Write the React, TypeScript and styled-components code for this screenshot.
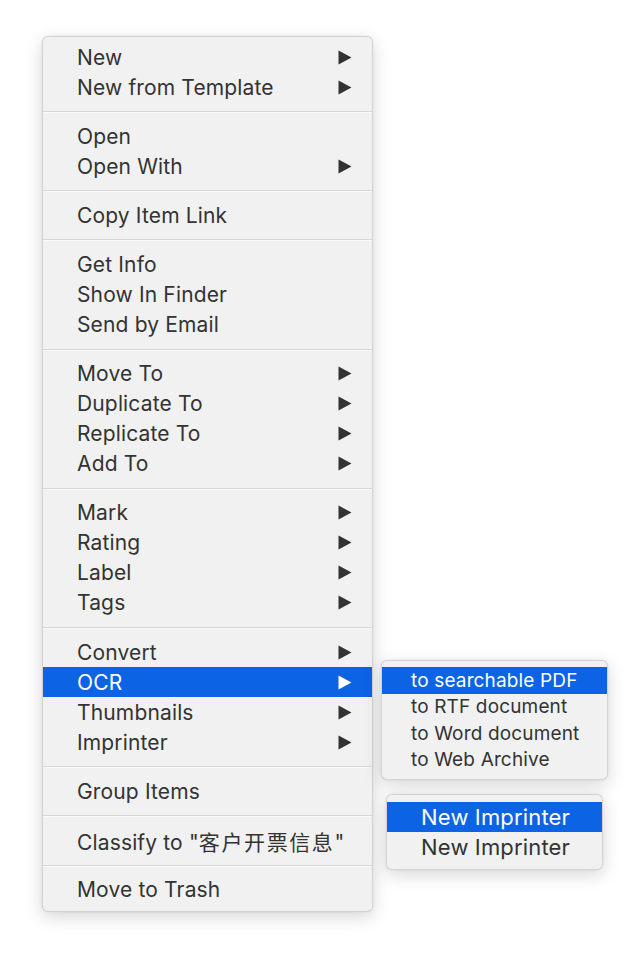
import React from "react";
import styled, { createGlobalStyle } from "styled-components";

const Global = createGlobalStyle`
  html, body { margin: 0; padding: 0; background: #ffffff; }
  body { font-family: Inter, "Noto Sans CJK SC", sans-serif; -webkit-font-smoothing: antialiased; }
`;

const Stage = styled.div`
  display: flex;
  align-items: flex-start;
  padding: 36px 0 0 42px;
  width: 644px;
  height: 960px;
  box-sizing: border-box;
`;

const Menu = styled.div<{ $w: number; $pt: number; $pb: number }>`
  box-sizing: border-box;
  width: ${(p) => p.$w}px;
  background: #f1f1f1;
  border: 1px solid rgba(0, 0, 0, 0.12);
  border-radius: 6px;
  box-shadow: 0 5px 18px rgba(0, 0, 0, 0.16), 0 0 3px rgba(0, 0, 0, 0.06);
  padding: ${(p) => p.$pt}px 0 ${(p) => p.$pb}px;
  display: flex;
  flex-direction: column;
`;

const Row = styled.div<{ $active?: boolean; $h: number; $size: number; $pl: number; $center?: boolean }>`
  height: ${(p) => p.$h}px;
  display: flex;
  align-items: center;
  justify-content: ${(p) => (p.$center ? "center" : "space-between")};
  padding: ${(p) => (p.$center ? "0 0 0 2px" : `0 20px 0 ${p.$pl}px`)};
  font-size: ${(p) => p.$size}px;
  color: ${(p) => (p.$active ? "#ffffff" : "#333333")};
  background: ${(p) => (p.$active ? "#0c63e4" : "transparent")};
  white-space: nowrap;
  letter-spacing: 0.15px;
`;

const Label = styled.span``;

const Cjk = styled.span`
  letter-spacing: 1.6px;
`;

const Separator = styled.div`
  height: 1px;
  margin: 9px 0 9.2px;
  background: #d6d6d6;
  box-shadow: 0 1px 0 #fafafa;
`;

const Side = styled.div`
  display: flex;
  flex-direction: column;
  align-items: flex-start;
  margin-top: 624px;
  margin-left: 8px;
`;

const SecondMenuWrap = styled.div`
  margin: 14px 0 0 5px;
`;

const Arrow = ({ active }: { active?: boolean }) => (
  <svg width="14" height="15" viewBox="0 0 14 15">
    <polygon points="0.5,0.5 13.5,7.5 0.5,14.5" fill={active ? "#ffffff" : "#333333"} />
  </svg>
);

type Item = { label: React.ReactNode; key: string; sub?: boolean; active?: boolean };

const it = (label: string, sub = false, active = false): Item => ({ label, key: label, sub, active });

const sections: Item[][] = [
  [it("New", true), it("New from Template", true)],
  [it("Open"), it("Open With", true)],
  [it("Copy Item Link")],
  [it("Get Info"), it("Show In Finder"), it("Send by Email")],
  [it("Move To", true), it("Duplicate To", true), it("Replicate To", true), it("Add To", true)],
  [it("Mark", true), it("Rating", true), it("Label", true), it("Tags", true)],
  [it("Convert", true), it("OCR", true, true), it("Thumbnails", true), it("Imprinter", true)],
  [it("Group Items")],
  [
    {
      key: "classify",
      label: (
        <>
          Classify to "<Cjk>客户开票信息</Cjk>"
        </>
      ),
    },
  ],
  [it("Move to Trash")],
];

const ocrItems = ["to searchable PDF", "to RTF document", "to Word document", "to Web Archive"];

export default function App() {
  return (
    <>
      <Global />
      <Stage>
        <Menu $w={331} $pt={5} $pb={6}>
          {sections.map((sec, i) => (
            <React.Fragment key={i}>
              {i > 0 && <Separator />}
              {sec.map((item) => (
                <Row key={item.key} $active={item.active} $h={30} $size={21} $pl={34}>
                  <Label>{item.label}</Label>
                  {item.sub && <Arrow active={item.active} />}
                </Row>
              ))}
            </React.Fragment>
          ))}
        </Menu>
        <Side>
          <Menu $w={227} $pt={6} $pb={6}>
            {ocrItems.map((t, i) => (
              <Row key={t} $active={i === 0} $h={26.5} $size={19} $pl={29}>
                <Label>{t}</Label>
              </Row>
            ))}
          </Menu>
          <SecondMenuWrap>
            <Menu $w={217} $pt={7} $pb={7}>
              <Row $active $h={30} $size={22} $pl={0} $center>
                <Label>New Imprinter</Label>
              </Row>
              <Row $h={30} $size={22} $pl={0} $center>
                <Label>New Imprinter</Label>
              </Row>
            </Menu>
          </SecondMenuWrap>
        </Side>
      </Stage>
    </>
  );
}
